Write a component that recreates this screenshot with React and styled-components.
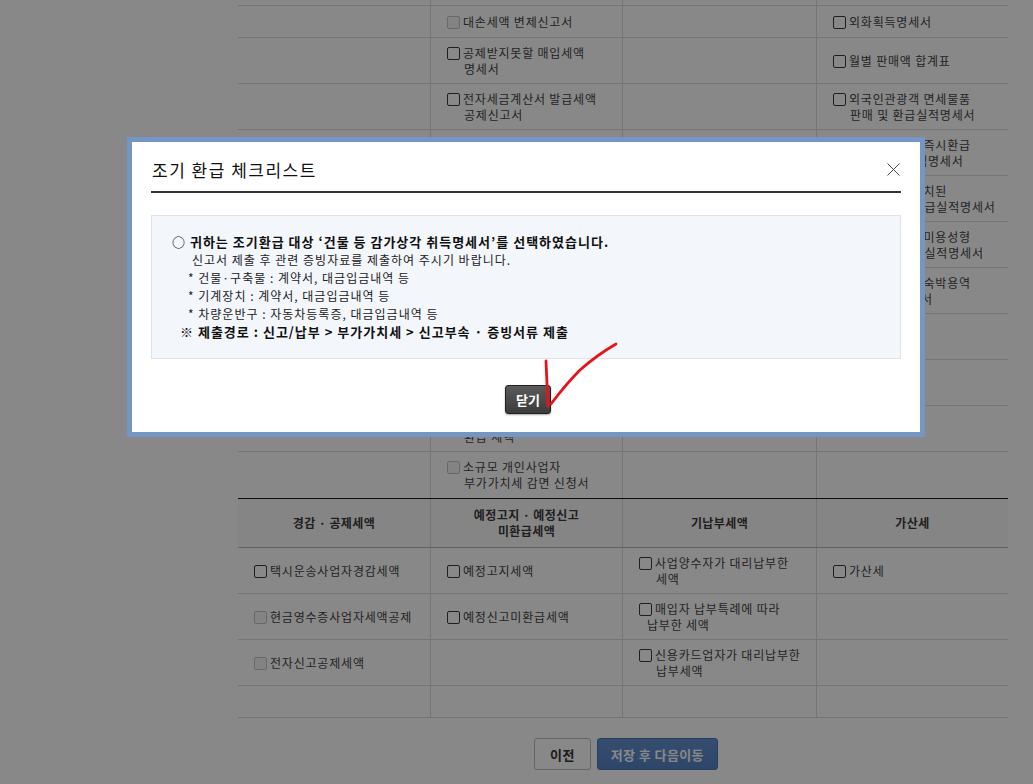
import React from "react";
import styled, { createGlobalStyle } from "styled-components";

const GlobalStyle = createGlobalStyle`
  html, body { margin: 0; padding: 0; background: #fff; }
  body {
    font-family: "Noto Sans CJK KR", "Liberation Sans", sans-serif;
    color: #444;
  }
  * { box-sizing: border-box; }
`;

// 상단 부속서류 표 (모달 뒤)
const upperRows = [
    { h: 46, cells: [] },
    { h: 32, cells: [null, { lines: ['대손세액 변제신고서'], disabled: true }, null, { lines: ['외화획득명세서'] }] },
    { h: 46, cells: [null, { lines: ['공제받지못할 매입세액', '명세서'] }, null, { lines: ['월별 판매액 합계표'] }] },
    { h: 46, cells: [null, { lines: ['전자세금계산서 발급세액', '공제신고서'] }, null, { lines: ['외국인관광객 면세물품', '판매 및 환급실적명세서'] }] },
    { h: 46, cells: [null, { lines: ['건물 등 감가상각', '자산 취득명세서'] }, null, { lines: ['외국인관광객 즉시환급', '물품 판매 실적명세서'] }] },
    { h: 46, cells: [null, { lines: ['신용카드매출전표 등', '수령명세서'] }, null, { lines: ['즉시환급기 설치된', '면세판매장 환급실적명세서'] }] },
    { h: 46, cells: [null, { lines: ['현금매출명세서'] }, null, { lines: ['외국인관광객 미용성형', '의료용역 환급실적명세서'] }] },
    { h: 46, cells: [null, { lines: ['부동산임대공급가액', '명세서'] }, null, { lines: ['외국인관광객 숙박용역', '환급실적명세서'] }] },
    { h: 46, cells: [null, { lines: ['면세농산물 등 의제매입', '세액공제신고서'] }] },
    { h: 46, cells: [null, { lines: ['재활용폐자원 등 매입세액', '공제신고서'] }] },
    { h: 46, cells: [null, { lines: ['사업양도에 따른', '환급 세액'] }] },
    { h: 46, last: true, cells: [null, { lines: ['소규모 개인사업자', '부가가치세 감면 신청서'], disabled: true }] },
];

const headers = [['경감 · 공제세액'], ['예정고지 · 예정신고', '미환급세액'], ['기납부세액'], ['가산세']];

const lowerRows = [
    { h: 46, cells: [{ lines: ['택시운송사업자경감세액'] }, { lines: ['예정고지세액'] }, { lines: ['사업양수자가 대리납부한', '세액'] }, { lines: ['가산세'] }] },
    { h: 46, cells: [{ lines: ['현금영수증사업자세액공제'], disabled: true }, { lines: ['예정신고미환급세액'] }, { lines: ['매입자 납부특례에 따라', '납부한 세액'], indent: 8 }] },
    { h: 46, cells: [{ lines: ['전자신고공제세액'], disabled: true }, null, { lines: ['신용카드업자가 대리납부한', '납부세액'] }] },
    { h: 32, cells: [] },
];

function CheckItem({ item }) {
    const [first, ...rest] = item.lines;
    return (
        <Item $disabled={item.disabled}>
            <div><Box $disabled={item.disabled} />{first}</div>
            {rest.map((line) => (
                <NextLine key={line} $indent={item.indent ?? 17}>{line}</NextLine>
            ))}
        </Item>
    );
}

function TableRow({ row }) {
    return (
        <Row $h={row.h} $last={row.last}>
            {[0, 1, 2, 3].map((i) => (
                <Cell key={i}>{row.cells[i] && <CheckItem item={row.cells[i]} />}</Cell>
            ))}
        </Row>
    );
}

function App() {
    return (
        <Page>
            <GlobalStyle />
            <Contents>
                {upperRows.map((row, i) => <TableRow key={i} row={row} />)}
                <HeadRow>
                    {headers.map((h, i) => (
                        <HeadCell key={i}>{h.map((l) => <div key={l}>{l}</div>)}</HeadCell>
                    ))}
                </HeadRow>
                {lowerRows.map((row, i) => <TableRow key={i} row={row} />)}
                <ButtonBar>
                    <PageButton>이전</PageButton>
                    <PageButton $primary>저장 후 다음이동</PageButton>
                </ButtonBar>
            </Contents>

            <Dim />
            <Modal>
                <TitleBar>
                    <Title>조기 환급 체크리스트</Title>
                    <CloseButton aria-label="닫기">
                        <svg width="13" height="13" viewBox="0 0 13 13">
                            <path d="M0.5 0.5 L12.5 12.5 M12.5 0.5 L0.5 12.5" stroke="#444" strokeWidth="1" fill="none" />
                        </svg>
                    </CloseButton>
                </TitleBar>
                <NoticeBox>
                    <Line $bold>○ 귀하는 조기환급 대상 ‘건물 등 감가상각 취득명세서’를 선택하였습니다.</Line>
                    <Line $indent={20}>신고서 제출 후 관련 증빙자료를 제출하여 주시기 바랍니다.</Line>
                    <Line $indent={16}>* 건물·구축물 : 계약서, 대금입금내역 등</Line>
                    <Line $indent={16}>* 기계장치 : 계약서, 대금입금내역 등</Line>
                    <Line $indent={16}>* 차량운반구 : 자동차등록증, 대금입금내역 등</Line>
                    <Line $bold $indent={8}>※ 제출경로 : 신고/납부 &gt; 부가가치세 &gt; 신고부속 · 증빙서류 제출</Line>
                </NoticeBox>
                <DarkButton>닫기</DarkButton>
            </Modal>

            <Annotation width="1033" height="784" viewBox="0 0 1033 784">
                <path d="M546 361 L547 384 L548 406" />
                <path d="M616 344 Q 597 355 580 370 Q 566 384 551 404" />
            </Annotation>
        </Page>
    );
}
export default App;

const Page = styled.div`
    position: relative;
    width: 1033px;
    height: 784px;
    overflow: hidden;
    background: #fff;
`
const Contents = styled.div`
    width: 770px;
    margin: -40px 0 0 238px;
`
const Row = styled.div`
    display: grid;
    grid-template-columns: 192px 192px 194px 192px;
    height: ${(p) => p.$h}px;
    border-bottom: ${(p) => (p.$last ? 'none' : '1px solid #dcdcdc')};
`
const Cell = styled.div`
    display: flex;
    align-items: center;
    padding-left: 16px;
    & + & {
        border-left: 1px solid #dcdcdc;
    }
`
const Item = styled.div`
    font-size: 12px;
    line-height: 16px;
    letter-spacing: 0.8px;
    color: #444;
    white-space: nowrap;
`
const NextLine = styled.div`
    padding-left: ${(p) => p.$indent}px;
`
const Box = styled.span`
    display: inline-block;
    width: 13px;
    height: 13px;
    margin-right: 3px;
    vertical-align: -2px;
    border: 1px solid ${(p) => (p.$disabled ? '#c4c4c4' : '#3a3a3a')};
    border-radius: 2px;
    background: ${(p) => (p.$disabled ? '#f6f6f6' : '#fff')};
`
const HeadRow = styled.div`
    display: grid;
    grid-template-columns: 192px 192px 194px 192px;
    height: 50px;
    border-top: 1px solid #1a1a1a;
    border-bottom: 1px solid #b8b8b8;
    background: #fafafa;
`
const HeadCell = styled.div`
    display: flex;
    flex-direction: column;
    align-items: center;
    justify-content: center;
    font-size: 12px;
    line-height: 16px;
    letter-spacing: 0.4px;
    font-weight: bold;
    color: #3a3a3a;
    & + & {
        border-left: 1px solid #dcdcdc;
    }
`
const ButtonBar = styled.div`
    display: flex;
    justify-content: center;
    gap: 6px;
    margin-top: 20px;
    padding-left: 6px;
`
const PageButton = styled.button`
    height: 32px;
    padding: 0 ${(p) => (p.$primary ? '13px' : '15px')};
    border-radius: 3px;
    font-family: inherit;
    font-size: 13px;
    font-weight: bold;
    letter-spacing: 0.4px;
    border: 1px solid ${(p) => (p.$primary ? '#4a78b4' : '#bdbdbd')};
    background: ${(p) => (p.$primary ? 'linear-gradient(#6392d2, #5683c4)' : '#fff')};
    color: ${(p) => (p.$primary ? '#fff' : '#333')};
`
const Dim = styled.div`
    position: absolute;
    inset: 0;
    background: rgba(0, 0, 0, 0.467);
`
const Modal = styled.div`
    position: absolute;
    left: 127px;
    top: 137px;
    width: 798px;
    height: 300px;
    border: 5px solid #7596c2;
    background: #fff;
    padding: 0 19px;
    display: flex;
    flex-direction: column;
`
const TitleBar = styled.div`
    display: flex;
    justify-content: space-between;
    align-items: center;
    height: 51px;
    padding-top: 5px;
    border-bottom: 2px solid #333;
`
const Title = styled.h2`
    margin: 0 0 0 1px;
    font-size: 17px;
    font-weight: normal;
    color: #111;
    letter-spacing: 1.5px;
`
const CloseButton = styled.button`
    display: flex;
    padding: 0;
    margin-right: 1px;
    border: none;
    background: none;
`
const NoticeBox = styled.div`
    margin-top: 22px;
    padding: 17px 20px;
    border: 1px solid #dde3ea;
    background: #f3f6fb;
`
const Line = styled.div`
    padding-left: ${(p) => p.$indent || 0}px;
    font-size: ${(p) => (p.$bold ? '13px' : '12px')};
    font-weight: ${(p) => (p.$bold ? 'bold' : 'normal')};
    line-height: 18px;
    letter-spacing: 1px;
    color: ${(p) => (p.$bold ? '#111' : '#222')};
    white-space: nowrap;
`
const DarkButton = styled.button`
    align-self: center;
    margin: 26px 0 0 4px;
    width: 46px;
    height: 29px;
    padding: 0;
    border: 1px solid #222;
    border-radius: 3px;
    background: linear-gradient(#5a5a5a, #3c3c3c);
    box-shadow: 0 1px 2px rgba(0, 0, 0, 0.35);
    color: #fff;
    font-family: inherit;
    font-size: 13px;
    font-weight: bold;
`
const Annotation = styled.svg`
    position: absolute;
    left: 0;
    top: 0;
    pointer-events: none;
    fill: none;
    stroke: #e5141b;
    stroke-width: 2.8;
    stroke-linecap: round;
    stroke-linejoin: round;
`
